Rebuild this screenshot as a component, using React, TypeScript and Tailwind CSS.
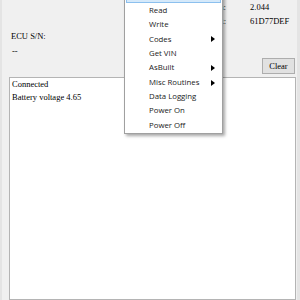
import React from "react";

const serif = { fontFamily: '"Liberation Serif", "Times New Roman", serif' };
const sans = { fontFamily: '"Open Sans", "Noto Sans", sans-serif' };

function Arrow() {
  return (
    <svg width="4" height="6" viewBox="0 0 4 6" className="absolute right-[7px] top-1/2 -translate-y-1/2">
      <path d="M0 0 L4 3 L0 6 Z" fill="#000" />
    </svg>
  );
}

const items: { label: string; sub?: boolean }[] = [
  { label: "" },
  { label: "Read" },
  { label: "Write" },
  { label: "Codes", sub: true },
  { label: "Get VIN" },
  { label: "AsBuilt", sub: true },
  { label: "Misc Routines", sub: true },
  { label: "Data Logging" },
  { label: "Power On" },
  { label: "Power Off" },
];

export default function App() {
  return (
    <div className="relative w-[300px] h-[300px] overflow-hidden bg-[#f0f0f0] text-black flex flex-col border-l-2 border-r-[3px] border-[#e4e4e4]" style={serif}>
      <div className="grid grid-cols-[224px_1fr] h-[14px] items-center text-[8.5px] leading-[14px]">
        <div className="text-right">Software Version:</div>
        <div className="pl-[24px]">2.044</div>
      </div>
      <div className="grid grid-cols-[224px_1fr] h-[14px] items-center text-[8.5px] leading-[14px]">
        <div className="text-right">ECU Part:</div>
        <div className="pl-[24px]">61D77DEF</div>
      </div>
      <div className="h-[15px] mt-[1px] pl-[9px] text-[8.5px] leading-[15px]">ECU S/N:</div>
      <div className="h-[14px] pl-[10px] text-[8.5px] leading-[14px]">--</div>
      <div className="flex justify-end pr-[2px]">
        <div className="w-[33px] h-[16px] bg-[#e1e1e1] border border-[#adadad] flex items-center justify-center text-[8.5px]">
          Clear
        </div>
      </div>
      <div className="flex-1 mt-[3px] ml-[7px] mr-[1px] bg-white border border-[#b4b4b4] pl-[2px] text-[8.5px] leading-[13px]">
        <div>Connected</div>
        <div>Battery voltage 4.65</div>
      </div>

      <div
        className="absolute left-[122px] top-[-14px] w-[99px] bg-white border border-[#a0a0a0] pt-[2px] shadow-[2px_2px_3px_rgba(0,0,0,0.35)]"
        style={sans}
      >
        {items.map((it, i) => (
          <div
            key={i}
            className={
              "relative h-[14.4px] flex items-center pl-[24px] text-[7.8px] text-[#1a1a1a] " +
              (i === 0 ? "bg-[#d5e9fa] border border-[#8cc0ee] mx-[1px]" : "")
            }
          >
            {it.label}
            {it.sub && <Arrow />}
          </div>
        ))}
      </div>
    </div>
  );
}
